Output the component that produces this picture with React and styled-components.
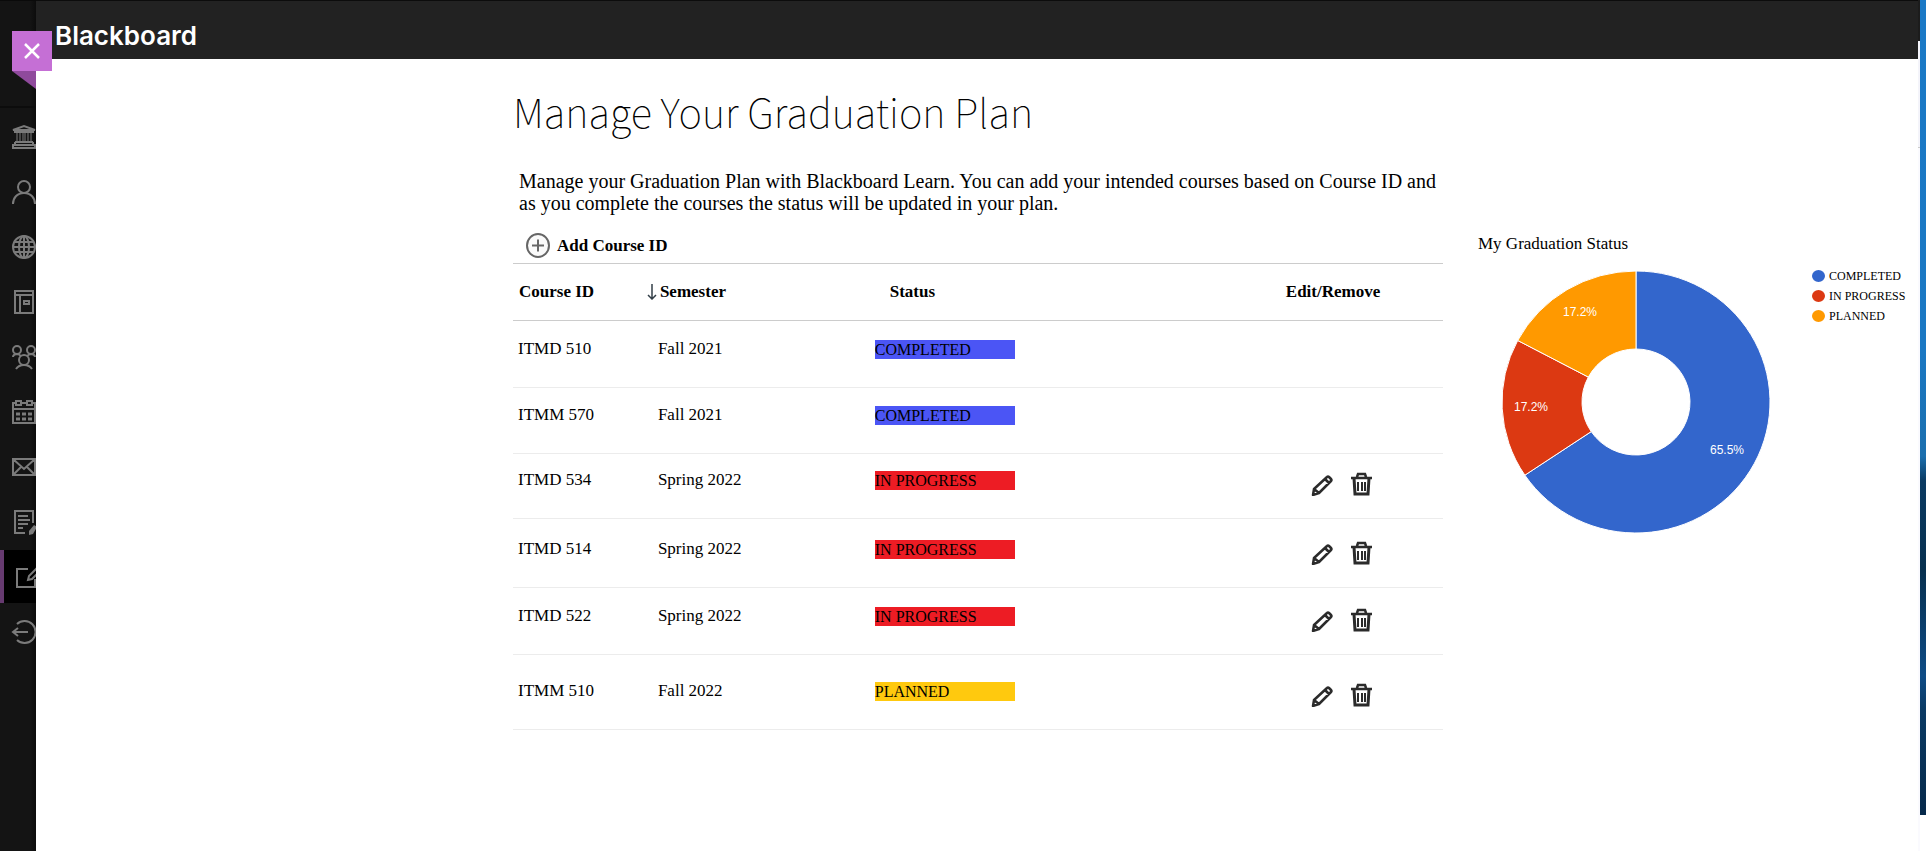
import React from "react";
import styled, { createGlobalStyle } from "styled-components";

const GlobalStyle = createGlobalStyle`
  * { box-sizing: border-box; }
  body {
    margin: 0;
    background: #fff;
    color: #000;
    font-family: "Liberation Serif", "Times New Roman", serif;
    font-size: 17px;
    line-height: 20px;
  }
`;

const Page = styled.div`
  display: flex;
  min-height: 100vh;
`;

const Sidebar = styled.aside`
  position: relative;
  flex: none;
  width: 36px;
  background: linear-gradient(to right, #141414 30px, #0c0c0c 36px);
  border-top: 1px solid #0a0a0a;
`;

const SidebarTop = styled.div`
  height: 107px;
  border-bottom: 2px solid #0c0c0c;
`;

const CloseButton = styled.button`
  position: absolute;
  z-index: 2;
  top: 30px;
  left: 12px;
  display: grid;
  place-items: center;
  width: 40px;
  height: 40px;
  padding: 0;
  border: 0;
  background: #c56fd5;
  cursor: pointer;
`;

const Fold = styled.svg`
  position: absolute;
  top: 70px;
  left: 12px;
`;

const NavList = styled.ul`
  display: flex;
  flex-direction: column;
  gap: 2px;
  margin: 0;
  padding: 2px 0 0;
  list-style: none;
`;

const NavLink = styled.a`
  display: flex;
  align-items: center;
  height: 53px;
  padding-left: 12px;
  overflow: hidden;
  color: #7b7b7b;
  background: ${(p) => (p.$active ? "#000" : "transparent")};
  box-shadow: ${(p) => (p.$active ? "inset 4px 0 #663a70" : "none")};
`;

const NavIcon = styled.svg`
  flex: none;
  width: 24px;
  height: 24px;
  fill: none;
  stroke: currentColor;
  stroke-width: 2;
  overflow: visible;
`;

const Body = styled.div`
  flex: 1;
  min-width: 0;
`;

const TopBar = styled.header`
  display: flex;
  align-items: center;
  height: 59px;
  padding: 12px 19px 0;
  background: #222;
  border-top: 1px solid #0c0c0c;
`;

const Brand = styled.span`
  color: #fff;
  font: 600 26px/32px Inter, "Open Sans", sans-serif;
`;

const Content = styled.main`
  display: grid;
  grid-template-columns: minmax(0, 477fr) minmax(0, 930fr) minmax(440px, 475fr);
`;

const Plan = styled.section`
  grid-column: 2;
  padding-top: 28px;
`;

const Title = styled.h1`
  margin: 0 0 35px;
  font: 100 40px/48px "Noto Sans CJK JP", "Open Sans", sans-serif;
`;

const Intro = styled.p`
  margin: 0 0 18px 6px;
  font-size: 20px;
  line-height: 22px;
`;

const AddButton = styled.button`
  display: flex;
  align-items: center;
  gap: 7px;
  height: 31px;
  margin-left: 13px;
  padding: 0 0 4px;
  border: 0;
  background: none;
  font: bold 17px/20px "Liberation Serif", serif;
  color: #000;
  cursor: pointer;
`;

const Table = styled.table`
  width: 100%;
  border-collapse: separate;
  border-spacing: 0;
  border-top: 1px solid #ccc;
  table-layout: fixed;
`;

const Col = styled.col`
  width: ${(p) => p.$share}%;
`;

const HeadCell = styled.th`
  height: 57px;
  padding: 0 0 0 ${(p) => p.$indent || 0}px;
  border-bottom: 1px solid #ccc;
  text-align: left;
  vertical-align: middle;
  white-space: nowrap;
`;

const SortLabel = styled.span`
  display: flex;
  align-items: center;
  gap: 3px;
`;

const Row = styled.tr`
  height: ${(p) => p.$height}px;
`;

const Cell = styled.td`
  padding: 0 0 ${(p) => p.$bottom || 28}px ${(p) => p.$indent || 0}px;
  border-bottom: 1px solid #ececec;
  vertical-align: bottom;
`;

const statusColors = {
  COMPLETED: "#4b55f5",
  "IN PROGRESS": "#ed1c24",
  PLANNED: "#ffc90e",
};

const Badge = styled.span`
  display: block;
  width: 140px;
  height: 19px;
  background: ${(p) => statusColors[p.$status]};
  font-size: 16px;
  line-height: 19px;
`;

const Actions = styled.div`
  display: flex;
  gap: 16px;
`;

const IconButton = styled.button`
  display: block;
  width: 23px;
  height: 24px;
  padding: 0;
  border: 0;
  background: none;
  cursor: pointer;
`;

const StatusPanel = styled.aside`
  padding: 175px 0 0 35px;
`;

const PanelTitle = styled.h2`
  margin: 0;
  font-size: 17px;
  font-weight: normal;
  line-height: 20px;
`;

const ChartRow = styled.div`
  display: flex;
  align-items: flex-start;
  gap: 41px;
  padding: 12px 0 0 23px;
`;

const Chart = styled.svg`
  flex: none;
  width: 270px;
  height: 264px;
  margin-top: 4px;
`;

const SliceLabel = styled.text`
  fill: #fff;
  font: 12px "Liberation Sans", Arial, sans-serif;
  text-anchor: middle;
`;

const Legend = styled.ul`
  margin: 0;
  padding: 0;
  list-style: none;
`;

const LegendItem = styled.li`
  display: flex;
  align-items: center;
  gap: 4px;
  font-size: 12px;
  line-height: 20px;
  white-space: nowrap;

  &::before {
    content: "";
    width: 13px;
    height: 12px;
    border-radius: 50%;
    background: ${(p) => p.$color};
  }
`;

const WindowEdge = styled.div`
  flex: none;
  width: 2px;
  background: linear-gradient(#1c1c1c 41px, #f4f4fa 41px, #f4f4fa 147px, #ccc 147px, #ccc 148px, #fafafe 148px);
`;

const Desktop = styled.div`
  flex: none;
  width: 6px;
  margin-bottom: 36px;
  background: linear-gradient(
    #1a79c6 0,
    #1a78c3 43%,
    #1b6fae 56%,
    #0a3a62 59%,
    #07304f 70%,
    #0e4c86 83%,
    #0a3a64 87%,
    #06294a 100%
  );
`;

const navItems = [
  {
    label: "Institution Page",
    icon: (
      <>
        <path d="M1 5 12 1l11 4H1ZM3 7h18M3 17h18M1 20h22v3H1zM3 17v3M21 17v3M3 5v3M21 5v3" />
        <path d="M5 8v9M8 8v9M11 8v9M13 8v9M16 8v9M19 8v9" strokeWidth="1" />
      </>
    ),
  },
  {
    label: "Profile",
    icon: (
      <>
        <circle cx="12" cy="7" r="6" />
        <path d="M1 24c0-6 4-11 11-11s11 5 11 11" />
      </>
    ),
  },
  {
    label: "Activity Stream",
    icon: (
      <>
        <circle cx="12" cy="12" r="11" />
        <ellipse cx="12" cy="12" rx="5" ry="11" />
        <path d="M12 1v22M1 12h22M3 7h18M3 17h18" />
      </>
    ),
  },
  {
    label: "Courses",
    icon: (
      <>
        <path d="M22 1H3v22h18V5H3M21 1v4M8 5v18" />
        <path d="M12 11h5v3h-5z" />
      </>
    ),
  },
  {
    label: "Organizations",
    icon: (
      <>
        <circle cx="5" cy="5" r="4" />
        <circle cx="19" cy="5" r="4" />
        <circle cx="12" cy="15" r="5" />
        <path d="M1 12c0-2 2-3 5-3l3 2M23 12c0-2-2-3-5-3l-3 2M4 24c2-3 5-4 8-4s6 1 8 4" />
      </>
    ),
  },
  {
    label: "Calendar",
    icon: (
      <>
        <path d="M4 3H1v20h22V3h-3M1 9h22M9 3h6" />
        <path d="M4 1h5v4H4zM15 1h5v4h-5z" />
        <path d="M4 14h4M10 14h4M16 14h4M4 19h4M10 19h4M16 19h4" strokeWidth="3" />
      </>
    ),
  },
  {
    label: "Messages",
    icon: <path d="M1 4h22v16H1zM1 4l11 10L23 4M1 20l8-8M23 20l-8-8" />,
  },
  {
    label: "Grades",
    icon: (
      <>
        <path d="M13 23H3V1h18v12M6 6h10M6 10h12M6 14h10M6 18h5" />
        <path d="m22 15 3 2-4 7-4 1v-4z" fill="currentColor" stroke="none" />
      </>
    ),
  },
  {
    label: "Tools",
    active: true,
    icon: (
      <>
        <path d="M16 4H5v18h18v-8" />
        <path d="M24 4l-7 7-1 4 4-1 7-7z" />
      </>
    ),
  },
  {
    label: "Sign Out",
    icon: <path d="M5 4a11 11 0 1 1 0 16M16 12H2M6 8l-5 4 5 4" />,
  },
];

const courses = [
  { id: "ITMD 510", semester: "Fall 2021", status: "COMPLETED", height: 67 },
  { id: "ITMM 570", semester: "Fall 2021", status: "COMPLETED", height: 66 },
  { id: "ITMD 534", semester: "Spring 2022", status: "IN PROGRESS", height: 65 },
  { id: "ITMD 514", semester: "Spring 2022", status: "IN PROGRESS", height: 69 },
  { id: "ITMD 522", semester: "Spring 2022", status: "IN PROGRESS", height: 67 },
  { id: "ITMM 510", semester: "Fall 2022", status: "PLANNED", height: 75 },
];

const slices = [
  { name: "COMPLETED", percent: 65.5, color: "#3366cc", x: 226, y: 184 },
  { name: "IN PROGRESS", percent: 17.2, color: "#dc3912", x: 30, y: 141 },
  { name: "PLANNED", percent: 17.2, color: "#ff9900", x: 79, y: 46 },
];

function slicePath(start, end) {
  const point = (share, rx, ry) => {
    const angle = share * 2 * Math.PI;
    return `${135 + rx * Math.sin(angle)} ${132 - ry * Math.cos(angle)}`;
  };
  const large = end - start > 0.5 ? 1 : 0;
  return [
    `M${point(start, 134, 131)}`,
    `A134 131 0 ${large} 1 ${point(end, 134, 131)}`,
    `L${point(end, 54, 53)}`,
    `A54 53 0 ${large} 0 ${point(start, 54, 53)}Z`,
  ].join("");
}

function Donut() {
  const total = slices.reduce((sum, s) => sum + s.percent, 0);
  let used = 0;
  return (
    <Chart viewBox="0 0 270 264" role="img" aria-label="My Graduation Status">
      {slices.map((s) => {
        const start = used / total;
        used += s.percent;
        return (
          <path key={s.name} d={slicePath(start, used / total)} fill={s.color} stroke="#fff" strokeWidth="1" />
        );
      })}
      {slices.map((s) => (
        <SliceLabel key={s.name} x={s.x} y={s.y}>
          {`${s.percent}%`}
        </SliceLabel>
      ))}
    </Chart>
  );
}

function PencilIcon() {
  return (
    <svg width="23" height="24" viewBox="0 0 23 24" fill="none" stroke="#2b2b2b" strokeWidth="2.500" strokeLinejoin="round">
      <path d="M2 23 3 17 16 5q1-1 2 0l2 2q1 1 0 2L8 21ZM3 17l5 4M14 7l4 4" />
    </svg>
  );
}

function TrashIcon() {
  return (
    <svg width="23" height="24" viewBox="0 0 23 24" fill="none" stroke="#2b2b2b">
      <path d="M1 6h21M7 5l1-3h7l1 3" strokeWidth="2.500" />
      <path d="M4 6l1 16h13l1-16" strokeWidth="3" />
      <path d="M8 10v9M12 10v9M15 10v9" strokeWidth="2" />
    </svg>
  );
}

function NavBar() {
  return (
    <Sidebar>
      <SidebarTop />
      <Fold width="24" height="18" viewBox="0 0 24 18" aria-hidden="true">
        <path d="M0 0h24v18z" fill="#8f4a9c" />
      </Fold>
      <CloseButton aria-label="Close">
        <svg width="16" height="16" viewBox="0 0 16 16" stroke="#fff" strokeWidth="2.500">
          <path d="M1 1l14 14M15 1 1 15" />
        </svg>
      </CloseButton>
      <nav aria-label="Main">
        <NavList>
          {navItems.map((item) => (
            <li key={item.label}>
              <NavLink href="#" $active={item.active} aria-label={item.label}>
                <NavIcon viewBox="0 0 24 24">{item.icon}</NavIcon>
              </NavLink>
            </li>
          ))}
        </NavList>
      </nav>
    </Sidebar>
  );
}

export default function App() {
  return (
    <>
      <GlobalStyle />
      <Page>
        <NavBar />
        <Body>
          <TopBar>
            <Brand>Blackboard</Brand>
          </TopBar>
          <Content>
            <Plan>
              <Title>Manage Your Graduation Plan</Title>
              <Intro>
                Manage your Graduation Plan with Blackboard Learn. You can add your intended courses based on Course ID
                and as you complete the courses the status will be updated in your plan.
              </Intro>
              <AddButton>
                <svg width="24" height="25" viewBox="0 0 24 25" fill="#fafafa" stroke="#666" strokeWidth="2">
                  <ellipse cx="12" cy="12.500" rx="11" ry="11.500" />
                  <path d="M6 12.500h12M12 6.500v12" />
                </svg>
                Add Course ID
              </AddButton>
              <Table>
                <colgroup>
                  <Col $share={14.4} />
                  <Col $share={24.5} />
                  <Col $share={44.2} />
                  <Col $share={16.9} />
                </colgroup>
                <thead>
                  <tr>
                    <HeadCell $indent={6}>Course ID</HeadCell>
                    <HeadCell aria-sort="descending">
                      <SortLabel>
                        <svg width="10" height="16" viewBox="0 0 10 16" fill="none" stroke="#333f48" strokeWidth="1.500">
                          <path d="M5 0v15M1 11l4 4 4-4" />
                        </svg>
                        Semester
                      </SortLabel>
                    </HeadCell>
                    <HeadCell $indent={15}>Status</HeadCell>
                    <HeadCell>Edit/Remove</HeadCell>
                  </tr>
                </thead>
                <tbody>
                  {courses.map((c) => (
                    <Row key={c.id} $height={c.height}>
                      <Cell $indent={5}>{c.id}</Cell>
                      <Cell $indent={11}>{c.semester}</Cell>
                      <Cell>
                        <Badge $status={c.status}>{c.status}</Badge>
                      </Cell>
                      <Cell $indent={25} $bottom={22}>
                        {c.status !== "COMPLETED" && (
                          <Actions>
                            <IconButton aria-label={`Edit ${c.id}`}>
                              <PencilIcon />
                            </IconButton>
                            <IconButton aria-label={`Remove ${c.id}`}>
                              <TrashIcon />
                            </IconButton>
                          </Actions>
                        )}
                      </Cell>
                    </Row>
                  ))}
                </tbody>
              </Table>
            </Plan>
            <StatusPanel>
              <PanelTitle>My Graduation Status</PanelTitle>
              <ChartRow>
                <Donut />
                <Legend>
                  {slices.map((s) => (
                    <LegendItem key={s.name} $color={s.color}>
                      {s.name}
                    </LegendItem>
                  ))}
                </Legend>
              </ChartRow>
            </StatusPanel>
          </Content>
        </Body>
        <WindowEdge />
        <Desktop />
      </Page>
    </>
  );
}
